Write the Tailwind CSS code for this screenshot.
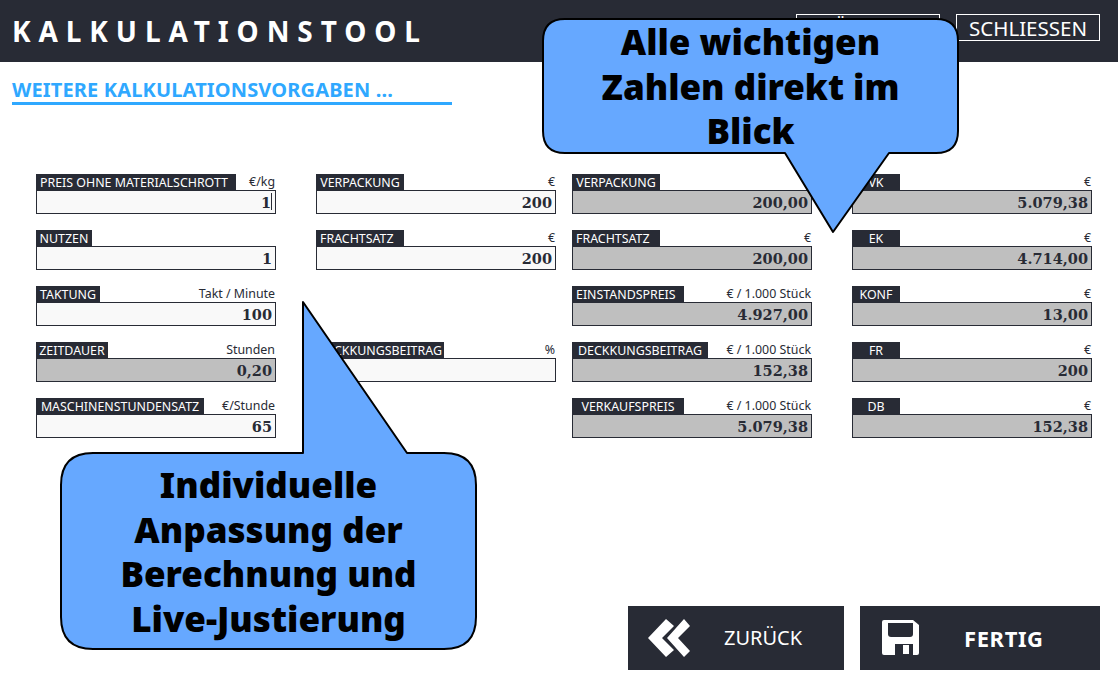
<!DOCTYPE html>
<html lang="de">
<head>
    <meta charset="UTF-8">
    <meta name="viewport" content="width=device-width, initial-scale=1.0">
    <title>Kalkulationstool</title>
    <script src="https://cdn.jsdelivr.net/npm/@tailwindcss/browser@4"></script>
</head>
<body class="bg-white">
<div class="relative w-[1118px] h-[684px] overflow-hidden bg-white font-['Noto_Sans','Open_Sans',sans-serif] text-[#282b35]">
    <!-- Kopfzeile -->
    <header class="h-[62px] bg-[#282b35] flex items-start justify-between pl-3 pr-[18px]">
        <h1 class="mt-[13px] text-[28px] leading-[36px] font-bold tracking-[7.9px] text-white">KALKULATIONSTOOL</h1>
        <div class="flex gap-4 mt-[14px]">
            <button class="w-[144px] h-[27px] border border-white text-white text-[19px] leading-[24px] whitespace-nowrap">ZURÜCKSETZEN</button>
            <button class="w-[144px] h-[27px] border border-white text-white text-[20.5px] leading-[24px] whitespace-nowrap">SCHLIESSEN</button>
        </div>
    </header>

    <!-- Überschrift -->
    <div class="pl-3 pt-[16px]">
        <h2 class="w-[440px] h-[27px] border-b-[3px] border-[#2fa8ff] text-[20px] leading-[24px] font-bold tracking-[0.15px] text-[#2fa8ff]">WEITERE KALKULATIONSVORGABEN ...</h2>
    </div>

    <!-- Felder -->
    <main class="flex pl-[36px] pt-[69px]">
        <div class="w-[240px] mr-[40px] flex flex-col gap-4">
            <div>
                <div class="flex justify-between items-center h-4 text-[12.4px] leading-[18px]">
                    <span class="w-[200px] h-4 bg-[#282b35] text-white pl-1 whitespace-nowrap">PREIS OHNE MATERIALSCHROTT</span>
                    <span class="pr-px">€/kg</span>
                </div>
                <div class="relative h-6 border border-[#282b35] bg-[#f9f9f9] pr-[4px] text-right font-['DejaVu_Serif',serif] font-bold text-[14.5px] leading-[24px]">1<span class="absolute right-[3px] top-[2px] w-px h-[17px] bg-[#282b35]"></span></div>
            </div>
            <div>
                <div class="flex justify-between items-center h-4 text-[12.4px] leading-[18px]">
                    <span class="w-[56px] h-4 bg-[#282b35] text-white text-center">NUTZEN</span>
                </div>
                <div class="h-6 border border-[#282b35] bg-[#f9f9f9] pr-[3px] text-right font-['DejaVu_Serif',serif] font-bold text-[14.5px] leading-[24px]">1</div>
            </div>
            <div>
                <div class="flex justify-between items-center h-4 text-[12.4px] leading-[18px]">
                    <span class="w-[64px] h-4 bg-[#282b35] text-white text-center">TAKTUNG</span>
                    <span class="pr-px">Takt / Minute</span>
                </div>
                <div class="h-6 border border-[#282b35] bg-[#f9f9f9] pr-[3px] text-right font-['DejaVu_Serif',serif] font-bold text-[14.5px] leading-[24px]">100</div>
            </div>
            <div>
                <div class="flex justify-between items-center h-4 text-[12.4px] leading-[18px]">
                    <span class="w-[72px] h-4 bg-[#282b35] text-white text-center">ZEITDAUER</span>
                    <span class="pr-px">Stunden</span>
                </div>
                <div class="h-6 border border-[#282b35] bg-[#bfbfbf] pr-[3px] text-right font-['DejaVu_Serif',serif] font-bold text-[14.5px] leading-[24px]">0,20</div>
            </div>
            <div>
                <div class="flex justify-between items-center h-4 text-[12.4px] leading-[18px]">
                    <span class="w-[168px] h-4 bg-[#282b35] text-white text-center">MASCHINENSTUNDENSATZ</span>
                    <span class="pr-px">€/Stunde</span>
                </div>
                <div class="h-6 border border-[#282b35] bg-[#f9f9f9] pr-[3px] text-right font-['DejaVu_Serif',serif] font-bold text-[14.5px] leading-[24px]">65</div>
            </div>
        </div>

        <div class="w-[240px] mr-[16px] flex flex-col gap-4">
            <div>
                <div class="flex justify-between items-center h-4 text-[12.4px] leading-[18px]">
                    <span class="w-[88px] h-4 bg-[#282b35] text-white text-center">VERPACKUNG</span>
                    <span class="pr-px">€</span>
                </div>
                <div class="h-6 border border-[#282b35] bg-[#f9f9f9] pr-[3px] text-right font-['DejaVu_Serif',serif] font-bold text-[14.5px] leading-[24px]">200</div>
            </div>
            <div>
                <div class="flex justify-between items-center h-4 text-[12.4px] leading-[18px]">
                    <span class="w-[88px] h-4 bg-[#282b35] text-white pl-1">FRACHTSATZ</span>
                    <span class="pr-px">€</span>
                </div>
                <div class="h-6 border border-[#282b35] bg-[#f9f9f9] pr-[3px] text-right font-['DejaVu_Serif',serif] font-bold text-[14.5px] leading-[24px]">200</div>
            </div>
            <div class="h-10"></div>
            <div>
                <div class="flex justify-between items-center h-4 text-[12.4px] leading-[18px]">
                    <span class="w-[128px] h-4 bg-[#282b35] text-white text-center whitespace-nowrap">DECKKUNGSBEITRAG</span>
                    <span class="pr-px">%</span>
                </div>
                <div class="h-6 border border-[#282b35] bg-[#f9f9f9]"></div>
            </div>
        </div>

        <div class="w-[240px] mr-[40px] flex flex-col gap-4">
            <div>
                <div class="flex justify-between items-center h-4 text-[12.4px] leading-[18px]">
                    <span class="w-[88px] h-4 bg-[#282b35] text-white text-center">VERPACKUNG</span>
                    <span class="pr-px">€</span>
                </div>
                <div class="h-6 border border-[#282b35] bg-[#bfbfbf] pr-[3px] text-right font-['DejaVu_Serif',serif] font-bold text-[14.5px] leading-[24px]">200,00</div>
            </div>
            <div>
                <div class="flex justify-between items-center h-4 text-[12.4px] leading-[18px]">
                    <span class="w-[88px] h-4 bg-[#282b35] text-white pl-1">FRACHTSATZ</span>
                    <span class="pr-px">€</span>
                </div>
                <div class="h-6 border border-[#282b35] bg-[#bfbfbf] pr-[3px] text-right font-['DejaVu_Serif',serif] font-bold text-[14.5px] leading-[24px]">200,00</div>
            </div>
            <div>
                <div class="flex justify-between items-center h-4 text-[12.4px] leading-[18px]">
                    <span class="w-[112px] h-4 bg-[#282b35] text-white pl-1">EINSTANDSPREIS</span>
                    <span class="pr-px">€ / 1.000 Stück</span>
                </div>
                <div class="h-6 border border-[#282b35] bg-[#bfbfbf] pr-[3px] text-right font-['DejaVu_Serif',serif] font-bold text-[14.5px] leading-[24px]">4.927,00</div>
            </div>
            <div>
                <div class="flex justify-between items-center h-4 text-[12.4px] leading-[18px]">
                    <span class="w-[136px] h-4 bg-[#282b35] text-white text-center whitespace-nowrap">DECKKUNGSBEITRAG</span>
                    <span class="pr-px">€ / 1.000 Stück</span>
                </div>
                <div class="h-6 border border-[#282b35] bg-[#bfbfbf] pr-[3px] text-right font-['DejaVu_Serif',serif] font-bold text-[14.5px] leading-[24px]">152,38</div>
            </div>
            <div>
                <div class="flex justify-between items-center h-4 text-[12.4px] leading-[18px]">
                    <span class="w-[112px] h-4 bg-[#282b35] text-white text-center">VERKAUFSPREIS</span>
                    <span class="pr-px">€ / 1.000 Stück</span>
                </div>
                <div class="h-6 border border-[#282b35] bg-[#bfbfbf] pr-[3px] text-right font-['DejaVu_Serif',serif] font-bold text-[14.5px] leading-[24px]">5.079,38</div>
            </div>
        </div>

        <div class="w-[240px] flex flex-col gap-4">
            <div>
                <div class="flex justify-between items-center h-4 text-[12.4px] leading-[18px]">
                    <span class="w-[48px] h-4 bg-[#282b35] text-white text-center">VK</span>
                    <span class="pr-px">€</span>
                </div>
                <div class="h-6 border border-[#282b35] bg-[#bfbfbf] pr-[3px] text-right font-['DejaVu_Serif',serif] font-bold text-[14.5px] leading-[24px]">5.079,38</div>
            </div>
            <div>
                <div class="flex justify-between items-center h-4 text-[12.4px] leading-[18px]">
                    <span class="w-[48px] h-4 bg-[#282b35] text-white text-center">EK</span>
                    <span class="pr-px">€</span>
                </div>
                <div class="h-6 border border-[#282b35] bg-[#bfbfbf] pr-[3px] text-right font-['DejaVu_Serif',serif] font-bold text-[14.5px] leading-[24px]">4.714,00</div>
            </div>
            <div>
                <div class="flex justify-between items-center h-4 text-[12.4px] leading-[18px]">
                    <span class="w-[48px] h-4 bg-[#282b35] text-white text-center">KONF</span>
                    <span class="pr-px">€</span>
                </div>
                <div class="h-6 border border-[#282b35] bg-[#bfbfbf] pr-[3px] text-right font-['DejaVu_Serif',serif] font-bold text-[14.5px] leading-[24px]">13,00</div>
            </div>
            <div>
                <div class="flex justify-between items-center h-4 text-[12.4px] leading-[18px]">
                    <span class="w-[48px] h-4 bg-[#282b35] text-white text-center">FR</span>
                    <span class="pr-px">€</span>
                </div>
                <div class="h-6 border border-[#282b35] bg-[#bfbfbf] pr-[3px] text-right font-['DejaVu_Serif',serif] font-bold text-[14.5px] leading-[24px]">200</div>
            </div>
            <div>
                <div class="flex justify-between items-center h-4 text-[12.4px] leading-[18px]">
                    <span class="w-[48px] h-4 bg-[#282b35] text-white text-center">DB</span>
                    <span class="pr-px">€</span>
                </div>
                <div class="h-6 border border-[#282b35] bg-[#bfbfbf] pr-[3px] text-right font-['DejaVu_Serif',serif] font-bold text-[14.5px] leading-[24px]">152,38</div>
            </div>
        </div>
    </main>

    <!-- Buttons unten -->
    <div class="flex gap-4 pl-[628px] pt-[168px]">
        <button class="relative w-[216px] h-16 bg-[#282b35] text-white text-[20px] flex items-center">
            <svg class="absolute left-[20px] top-[13px]" width="42" height="38" viewBox="0 0 42 38" fill="#fff">
                <path d="M0 19 L18 0 L26 7 L14 19 L26 31 L18 38 Z"/>
                <path d="M19 19 L36 0 L42 7 L30 19 L42 32 L36 38 Z"/>
            </svg>
            <span class="pl-[96px]">ZURÜCK</span>
        </button>
        <button class="relative w-[240px] h-16 bg-[#282b35] text-white text-[22px] tracking-[0.6px] font-bold flex items-center">
            <svg class="absolute left-[22px] top-[14px]" width="37" height="35" viewBox="0 0 37 35">
                <path fill="#fff" d="M2 0 H31 L37 5 V33 Q37 35 35 35 H2 Q0 35 0 33 V2 Q0 0 2 0 Z"/>
                <path fill="#282b35" d="M6 3 H31 V14 Q31 17 28 17 H9 Q6 17 6 14 Z"/>
                <path fill="#282b35" d="M13 24 H31 V35 H13 Z"/>
                <rect fill="#fff" x="21" y="25" width="6" height="9"/>
            </svg>
            <span class="pl-[104px]">FERTIG</span>
        </button>
    </div>

    <!-- Sprechblase oben -->
    <div class="absolute left-0 top-0 w-[1118px] h-[240px] pointer-events-none">
        <svg class="absolute left-0 top-0" width="1118" height="240" viewBox="0 0 1118 240">
            <path fill="#66a8ff" stroke="#000" stroke-width="2" stroke-linejoin="round" d="M565 19 H936 Q958 19 958 41 V131 Q958 153 936 153 H889 L833 232 L785 153 H565 Q543 153 543 131 V41 Q543 19 565 19 Z"/>
        </svg>
        <div class="absolute left-[543px] top-[20px] w-[415px] text-center text-black font-black text-[35px] leading-[44.5px]">Alle wichtigen<br>Zahlen direkt im<br>Blick</div>
    </div>

    <!-- Sprechblase unten -->
    <div class="absolute left-0 top-[296px] w-[1118px] h-[360px] pointer-events-none">
        <svg class="absolute left-0 top-0" width="1118" height="360" viewBox="0 0 1118 360">
            <path fill="#66a8ff" stroke="#000" stroke-width="2" stroke-linejoin="round" d="M93 157 H303 V6 L407 157 H444 Q476 157 476 189 V321 Q476 353 444 353 H93 Q61 353 61 321 V189 Q61 157 93 157 Z"/>
        </svg>
        <div class="absolute left-[61px] top-[167px] w-[415px] text-center text-black font-black text-[35px] leading-[44.7px]">Individuelle<br>Anpassung der<br>Berechnung und<br>Live-Justierung</div>
    </div>
</div>
</body>
</html>
